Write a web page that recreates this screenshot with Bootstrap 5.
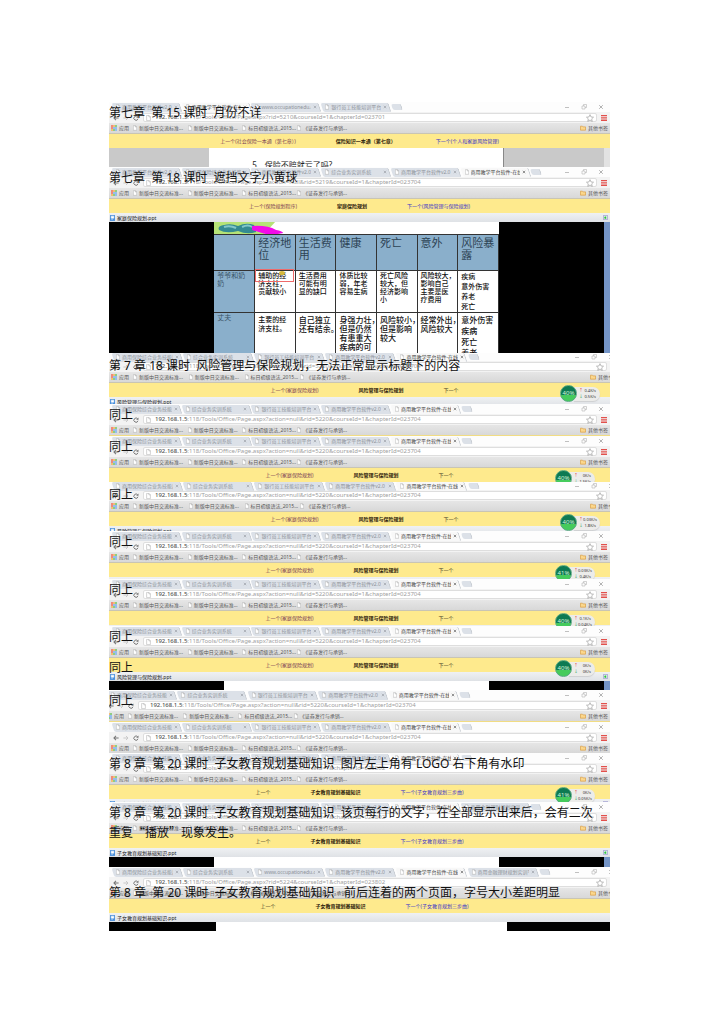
<!DOCTYPE html>
<html lang="zh-CN">
<head>
<meta charset="utf-8">
<meta name="viewport" content="width=device-width, initial-scale=1">
<title>课件问题记录</title>
<link rel="stylesheet" href="https://cdn.jsdelivr.net/npm/bootstrap@5.3.0/dist/css/bootstrap.min.css">
<script src="https://cdn.jsdelivr.net/npm/bootstrap@5.3.0/dist/js/bootstrap.bundle.min.js"></script>
<style>
body{background:#fff;font-family:"Noto Sans","Noto Sans CJK SC",sans-serif;font-size:5px;line-height:8px;color:#555}
.sheet{padding:102px 109px 80px}
.shot{overflow:hidden;height:var(--crop)}
.shot button{border:0;background:none;padding:0;line-height:0;color:inherit}
.shot svg{display:block;flex:none}
.shot a{text-decoration:none;color:inherit}
.wide .pane{width:102%}
.left .pane{width:101%;margin-left:-1%}
.short .tabstrip{height:8px}
.tight{gap:2px}
/* tab strip */
.tabstrip{height:10px;padding-left:3px;background:#fdfdfd}
.tabitem{width:14%;height:9px;padding:0 4px;position:relative;isolation:isolate;color:#8d9299}
.tabitem::before,.newtab::before{content:"";position:absolute;inset:0 1px;background:#dce1e8;border:solid #c3c8ce;border-width:0 1px 0 0;border-radius:2px;transform:skewX(18deg);z-index:-1}
.tabitem.current{color:#444}
.tabitem.current::before{background:#f8f8f8}
.tabitem span{overflow:hidden;white-space:nowrap}
.newtab{width:12px;height:6px;position:relative;isolation:isolate}
.winctl{gap:11px;padding-right:6px;color:#a5a5a5}
/* address row */
.addressrow{height:11px;background:#f3f3f3;padding:0 3px 0 4px;color:#777}
.tools{width:30px}
.addressbox{height:9px;background:#fff;border:1px solid #dedede;border-radius:2px;font:6px/7px "Noto Sans",sans-serif;padding:0 2px}
.addressbox input{border:0;outline:0;background:none;padding:0;height:7px;font:inherit;color:#a0a0a0;min-width:0}
.addressbox b{font-weight:500;color:#555}
/* bookmarks */
.bookmarks{height:11px;background:linear-gradient(#e6e6e6,#d8d8d8);border-bottom:1px solid #c9c5b4;padding:0 2px}
.bookmarks a{width:11%;white-space:nowrap}
.bookmarks a.apps{width:22px}
.bookmarks a.others{width:auto;margin-left:auto}
.thin .bookmarks{border-bottom-color:#f1dc83}
/* lesson bar */
.lesson{height:14px;background:#feea8d;gap:40px;position:relative;white-space:nowrap;color:#433a22}
.lesson .prev{color:#7a3d56}
.lesson .prev.plain,.lesson .next.plain{color:#4d452c}
.lesson .next{color:#3b35c9}
.lesson strong{color:#2c200c}
.filebar{height:9px;background:linear-gradient(#eff1f3,#dfe2e6);color:#222;padding:0 2px 0 1px}
/* network meter floating over the page */
.meter{position:absolute;right:15px;top:2px;z-index:2}
.wide .meter{right:20px}
.disc{width:17px;height:17px;border-radius:50%;background:linear-gradient(#0e7a52 60%,#45cb5c 62%);border:1px solid #56a780;color:#d5f7d8;font-size:6px;line-height:15px;text-align:center;z-index:1}
.rates{width:26px;height:14px;margin-left:-3px;padding:1px 4px 1px 5px;border-radius:0 7px 7px 0;background:#ececea;box-shadow:0 1px 1px #9995;font-size:4px;line-height:6px;color:#333}
.rates i{font-style:normal;color:#d33}.rates div+div i{color:#1a9a55}
/* page content below the bars */
.stage{background:#000}
.side{width:21%;flex:none}
.rail{width:6px;flex:none;background:#7494c6}
.rail.gray{background:#e2e2e2}
.strip{height:11px}
.narrow .strip .side{width:23%}
.reader{height:19px;background:#c9c9c9}
.reader .side{width:20%}
.reader .paper{background:#fff;padding:11px 0 0 43px;border-right:1px solid #888;font-size:8px;line-height:12px;color:#222;white-space:nowrap}
.deck{height:131px}
.slide{background:#fff;min-width:0}
.slide .art{height:12px;display:block;width:100%}
.risk{table-layout:fixed;width:100%;margin:0;font-size:7px;line-height:8px;font-weight:500;color:#111;border-collapse:collapse}
.risk th,.risk td{border:1px solid #333;border-width:1px 1px 0 0;padding:1px 0 0 3px;vertical-align:top;white-space:nowrap}
.risk th{background:#8aafcb;font-weight:400;color:#3b5568;font-size:7px}
.risk thead th{font-size:11px;line-height:12px;height:36px;padding-top:2px;color:#2d4354}
.risk tbody tr{height:42px}
.risk .big td{font-size:8px;line-height:9px;padding-top:2px}
.risk .big td:nth-child(2){font-size:7px}
.risk td.lines{line-height:10px}.risk .big td.lines{line-height:11px;padding-top:1px}
.risk .focus{position:relative}
.marker{position:absolute;inset:-2px 1px auto 0;height:13px;border:1px solid #ee6a6a}
.marker::after{content:"";position:absolute;left:23px;top:1px;width:6px;height:4px;border-radius:50%;background:#d5b93c}
/* notes typed over the pictures */
.remark{position:absolute;left:0;top:1px;margin:0;font:12px/19px "Noto Sans","Noto Sans CJK SC",sans-serif;font-weight:400;color:#111;white-space:pre;z-index:3}
.remark.mid{top:3px}.remark.low{top:16px}.remark.lower{top:32px}
.remark q{quotes:none;font-family:"Noto Sans CJK SC",sans-serif}
</style>
</head>
<body>
<svg class="d-none">
<symbol id="doc" viewBox="0 0 6 8"><path d="M.5.5h3.2L5.5 2.4v5.1h-5zM3.5.5v2h2" fill="#fff" stroke="#aaa" stroke-width=".7"/></symbol>
<symbol id="x" viewBox="0 0 5 5"><path d="M1 1l3 3M4 1L1 4" stroke="currentColor" stroke-width=".7"/></symbol>
<symbol id="back" viewBox="0 0 8 8"><path d="M7.5 4H1.5M4 1.3L1.3 4 4 6.7" fill="none" stroke="currentColor" stroke-width="1.4"/></symbol>
<symbol id="fwd" viewBox="0 0 8 8"><path d="M.5 4h6M4 1.3L6.7 4 4 6.7" fill="none" stroke="#c4c4c4" stroke-width="1.2"/></symbol>
<symbol id="reload" viewBox="0 0 8 8"><path d="M6.3 2.6A2.8 2.8 0 1 0 6.7 5" fill="none" stroke="currentColor" stroke-width="1.3"/><path d="M7.3.6v3.1H4.2z" fill="currentColor"/></symbol>
<symbol id="star" viewBox="0 0 10 10"><path d="M5 .8l1.3 2.9 3.1.3-2.3 2.1.7 3.1L5 7.6 2.2 9.2l.7-3.1L.6 4l3.1-.3z" fill="#fff" stroke="#999" stroke-width=".8"/></symbol>
<symbol id="menu" viewBox="0 0 6 6"><path d="M0 0h6v1.3H0zM0 2.3h6v1.3H0zM0 4.6h6V6H0z" fill="#e2504c"/></symbol>
<symbol id="grid" viewBox="0 0 6 6"><path d="M0 0h2v2H0zM0 2h2v2H0z" fill="#ef8a7c"/><path d="M2 0h2v2H2zM0 4h2v2H0z" fill="#f3bd74"/><path d="M4 0h2v2H4zM2 4h2v2H2z" fill="#8fce82"/><path d="M2 2h4v2H2zM4 4h2v2H4z" fill="#96bdec"/></symbol>
<symbol id="folder" viewBox="0 0 7 6"><path d="M.5.9h2.3l.7.8h3v3.8h-6z" fill="#fbd78c" stroke="#d99d40" stroke-width=".8"/></symbol>
<symbol id="ppt" viewBox="0 0 6 7"><path d="M0 0h6v7H0z" fill="#4a90dc"/><path d="M1.5 1.3h3v2.4h-3zM1.5 5h2" fill="#fff" stroke="#fff" stroke-width=".6"/></symbol>
<symbol id="expand" viewBox="0 0 6 6"><path d="M.5.5h5v5h-5z" fill="#fff" stroke="#8d8bc6" stroke-width=".8"/><path d="M1.5 2.2L4 1.6v3.2L1.5 4.2z" fill="#2dbf45"/></symbol>
</svg>
<main class="sheet" id="sheet"></main>
<script>
const icon=(id,w,h)=>`<svg width="${w}" height="${h||w}" aria-hidden="true"><use href="#${id}"/></svg>`;
const A='商用保险综合业务技能部',B='综合业务实训系统',C='银行员工技能培训平台',D='商用教学平台软件v2.0',E='*商用教学平台软件-在线',W='www.occupationedu.cn',F='商用金融理财规划实训平';
const usual=[A,B,C,D,E];
const url='action=null&rid=5220&courseId=1&chapterId=023704';
const risk=['上一个(家庭保险规划)','风险管理与保险规划','下一个'];
const kids=['上一个','子女教育规划基础知识','下一个(子女教育规划三步曲)'];

const tab=t=>`<div class="tabitem d-flex align-items-center tight${t[0]==='*'?' current':''}">${icon('doc',4,6)}<span class="flex-grow-1">${t.replace('*','')}</span><button type="button" aria-label="关闭标签页">${icon('x',4)}</button></div>`;
const tabs=list=>`<div class="tabstrip d-flex align-items-center">${list.map(tab).join('')}<div class="newtab"></div>
<div class="winctl d-flex align-items-center ms-auto"><button type="button" aria-label="最小化"><svg width="6" height="6"><path d="M1 3.5h4" stroke="currentColor" stroke-width=".7"/></svg></button><button type="button" aria-label="还原"><svg width="6" height="6"><path d="M1 2h3v3H1zM2.5 2V.5h3v3H4" fill="none" stroke="currentColor" stroke-width=".5"/></svg></button><button type="button" aria-label="关闭">${icon('x',6)}</button></div></div>`;
const address=q=>`<div class="addressrow d-flex align-items-center"><div class="tools d-flex align-items-center justify-content-between pe-1"><button type="button" aria-label="后退">${icon('back',6)}</button><button type="button" aria-label="前进">${icon('fwd',6)}</button><button type="button" aria-label="刷新">${icon('reload',6)}</button></div>
<div class="addressbox d-flex align-items-center flex-grow-1">${icon('doc',5,6)}<b class="ps-1">192.168.1.5</b><input class="flex-grow-1" aria-label="地址" value=":118/Tools/Office/Page.aspx?${q.replace(/&/g,'&amp;')}"><button type="button" aria-label="收藏">${icon('star',8)}</button></div><button class="ps-1" type="button" aria-label="菜单">${icon('menu',6)}</button></div>`;
const mark=t=>`<a href="#" class="d-flex align-items-center tight">${icon('doc',4,6)}<span>${t}</span></a>`;
const bookmarks=`<nav class="bookmarks d-flex align-items-center"><a href="#" class="apps d-flex align-items-center tight">${icon('grid',6)}<span>应用</span></a>${['新版中日交流标准...','新版中日交流标准...','标日初级语法_2015...','《证券发行与承销...'].map(mark).join('')}<a href="#" class="others d-flex align-items-center tight">${icon('folder',6)}<span>其他书签</span></a></nav>`;
const meter=m=>`<div class="meter d-flex align-items-center"><div class="disc">${m[0]}</div><div class="rates">${[['↑',m[1]],['↓',m[2]]].map(r=>`<div class="d-flex justify-content-between"><i>${r[0]}</i><span>${r[1]}</span></div>`).join('')}</div></div>`;
const lesson=(l,m)=>`<div class="lesson d-flex align-items-center justify-content-center"><a href="#" class="prev${l[0].length<4?' plain':''}">${l[0]}</a><strong>${l[1]}</strong><a href="#" class="next${l[2].length<4?' plain':''}">${l[2]}</a>${m?meter(m):''}</div>`;
const file=t=>`<div class="filebar d-flex align-items-center tight">${icon('ppt',5,6)}<span class="flex-grow-1">${t}.ppt</span>${icon('expand',5)}</div>`;
const strip=`<div class="stage strip d-flex"><div class="side"></div><div class="bg-white flex-grow-1"></div><div class="side"></div><div class="rail"></div></div>`;
const reader=`<div class="reader d-flex"><div class="side"></div><div class="paper flex-grow-1">5、保险不赔就亏了吗?</div><div class="side"></div><div class="rail gray"></div></div>`;
const deck=`<div class="stage deck d-flex"><div class="side"></div><div class="slide flex-grow-1">
<svg class="art" viewBox="0 0 284 12" preserveAspectRatio="none"><path d="M0 0h61L50 12H0z" fill="#b5e376"/><path d="M5 8Q3 4 10 3Q17 1 24 4Q32 0 40 3L42 10Q33 13 24 9Q12 12 5 8z" fill="#348b92"/><path d="M10 5q6-2 12 1M28 5q6-3 10 0" stroke="#83c8c8" stroke-width="2" fill="none"/><path d="M38 4Q53 3 62 8Q68 9 69 11Q56 14 48 11L38 8z" fill="#f20be8"/></svg>
<table class="risk"><thead><tr><th></th><th>经济地<br>位</th><th>生活费<br>用</th><th>健康</th><th>死亡</th><th>意外</th><th>风险暴<br>露</th></tr></thead><tbody>
<tr><th>爷爷和奶<br>奶</th><td class="focus">辅助的经<br>济支柱，<br>贡献较小<span class="marker"></span></td><td>生活费用<br>可能有明<br>显的缺口</td><td>体质比较<br>弱，年老<br>容易生病</td><td>死亡风险<br>较大，但<br>经济影响<br>小</td><td>风险较大，<br>影响自己<br>主要是医<br>疗费用</td><td class="lines">疾病<br>意外伤害<br>养老<br>死亡</td></tr>
<tr class="big"><th>丈夫</th><td>主要的经<br>济支柱。</td><td>自己独立<br>还有结余。</td><td>身强力壮，<br>但是仍然<br>有患重大<br>疾病的可</td><td>风险较小，<br>但是影响<br>较大</td><td>经常外出，<br>风险较大</td><td class="lines">意外伤害<br>疾病<br>死亡<br>养老</td></tr></tbody></table></div><div class="side"></div><div class="rail"></div></div>`;

const shots=[
{h:65,tabs:[D,E,W,C],q:'rid=5210&courseId=1&chapterId=023701',l:['上一个(社会保险一本通（第七章）)','保险知识一本通（第七章）','下一个(个人和家庭风险管理)'],body:reader,notes:[['','第七章  第 15 课时  月份不详']]},
{h:186,tabs:[D,A,D,B,D,E],q:'action=null&rid=5219&courseId=1&chapterId=023704',l:['上一个(保险规划程序)','家庭保险规划','下一个(风险管理与保险规划)'],f:'家庭保险规划',body:deck,notes:[['','第七章  第 18 课时  遮挡文字小黄球']]},
{h:51,c:'wide short',l:risk,m:['40%','0.4K/s','0.5K/s'],f:risk[1],notes:[['mid','第 7 章 18 课时  风险管理与保险规划，无法正常显示标题下的内容']]},
{h:32,c:'thin',notes:[['','同上']]},
{h:46,l:risk,m:['40%','0K/s','1.5K/s'],notes:[['','同上']]},
{h:49,c:'wide short',l:risk,m:['40%','0.03K/s','1.8K/s'],f:risk[1],notes:[['mid','同上']]},
{h:48,l:risk,m:['41%','0.03K/s','0.4K/s'],f:risk[1],notes:[['','同上']]},
{h:47,l:risk,m:['40%','0.1K/s','0.04K/s'],f:risk[1],notes:[['','同上']]},
{h:64,c:'narrow',l:risk,m:['40%','0K/s','0K/s'],f:risk[1],body:strip,notes:[['','同上'],['lower','同上']]},
{h:32,c:'left thin',notes:[['','同上']]},
{h:31,c:'thin'},
{h:49,q:'rid=5224&courseId=1&chapterId=023802',l:kids,m:['41%','0K/s','0.05K/s'],f:kids[1],notes:[['','第 8 章  第 20 课时  子女教育规划基础知识  图片左上角有 LOGO 右下角有水印']]},
{h:65,tabs:[A,B,W,D,E,F],q:'rid=5224&courseId=1&chapterId=023802',l:kids,f:kids[1],body:strip,notes:[['','第 8 章  第 20 课时  子女教育规划基础知识  该页每行的文字，在全部显示出来后，会有二次\n重复<q>“播放”</q>现象发生。']]},
{h:64,c:'wide',tabs:[A,B,W,D,E,F],q:'rid=5224&courseId=1&chapterId=023802',l:kids,f:kids[1],body:strip,notes:[['low','第 8 章  第 20 课时  子女教育规划基础知识   前后连着的两个页面，字号大小差距明显']]}
];
document.getElementById('sheet').innerHTML=shots.map(s=>`<section class="shot position-relative ${s.c||''}" style="--crop:${s.h}px"><div class="pane">${tabs(s.tabs||usual)}${address(s.q||url)}${bookmarks}${s.l?lesson(s.l,s.m):''}${s.f?file(s.f):''}${s.body||''}</div>${(s.notes||[]).map(n=>`<p class="remark ${n[0]}">${n[1]}</p>`).join('')}</section>`).join('');
</script>
</body>
</html>
